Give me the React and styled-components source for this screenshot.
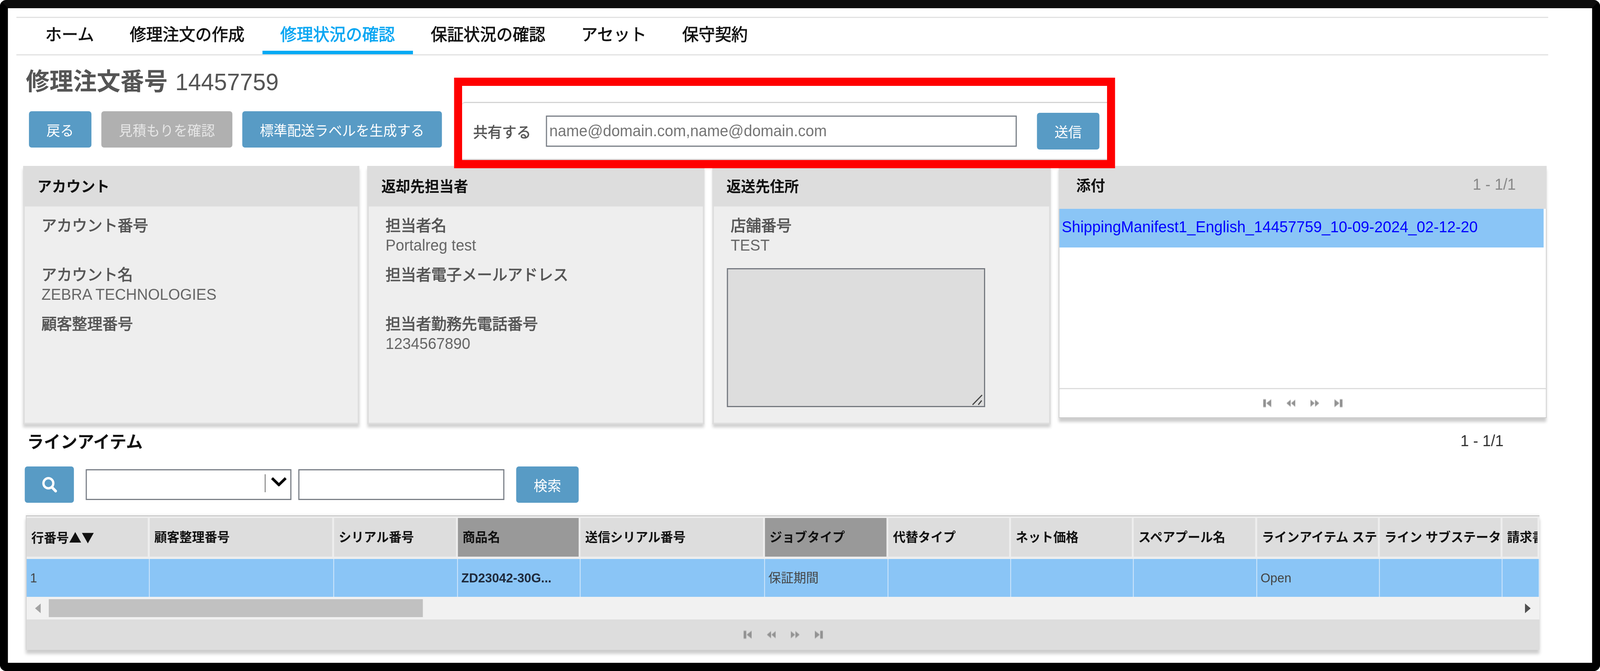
import React from 'react'
import styled, { createGlobalStyle } from 'styled-components'

const GlobalStyle = createGlobalStyle`
  html, body { margin: 0; padding: 0; background: #fff; overflow: hidden; }
  * { box-sizing: border-box; }
  body { font-family: "Liberation Sans", "Noto Sans CJK JP", sans-serif; }
`

const Frame = styled.div`
  width: 4200px;
  height: 1719px;
  transform: scaleX(0.97524);
  transform-origin: 0 0;
  border: 21px solid #000;
  border-top-color: #0c0c0c;
  border-radius: 16px;
  background: #fff;
  padding: 22px 0 0 22px;
  overflow: hidden;
`

const NavBar = styled.nav`
  width: 4021px;
  height: 99px;
  display: flex;
  padding-left: 29px;
  border-top: 3px solid #e2e2e2;
  border-bottom: 3px solid #e2e2e2;
`

const NavItem = styled.a`
  height: 93px;
  padding: 0 47px;
  line-height: 87px;
  font-size: 43px;
  -webkit-text-stroke: 1px currentColor;
  white-space: nowrap;
  color: ${p => (p.$active ? '#0aa6f2' : '#111')};
  border-bottom: 9px solid ${p => (p.$active ? '#03a9f4' : 'transparent')};
`

const TopRow = styled.div`
  height: 283px;
  display: flex;
  align-items: flex-start;
`

const TitleCol = styled.div`
  width: 1149px;
  padding-top: 33px;
`

const Title = styled.h1`
  margin: 0 0 40px 25px;
  height: 70px;
  line-height: 70px;
  font-size: 62px;
  font-weight: 700;
  color: #555;
  span {
    margin-left: 20px;
    font-size: 61px;
    font-weight: 400;
  }
`

const ButtonRow = styled.div`
  margin-left: 33px;
  display: flex;
  gap: 26px;
`

const Button = styled.button`
  height: ${p => p.$height || 93}px;
  padding: 0 46px;
  flex: none;
  font-family: inherit;
  font-size: 36px;
  color: ${p => (p.$muted ? '#e6e6e6' : '#fff')};
  background: ${p => (p.$muted ? '#b0b0b0' : '#589bc5')};
  border: 0;
  border-radius: 7px;
`

const ShareBox = styled.div`
  position: relative;
  z-index: 2;
  margin-top: 57px;
  width: 1735px;
  height: 232px;
  flex: none;
  border: 21px solid #f00;
  background: #fff;
  padding-top: 41px;
`

const SharePanel = styled.div`
  height: 149px;
  display: flex;
  align-items: center;
  padding-left: 29px;
  border-top: 3px solid #d4d4d4;
  border-bottom: 3px solid #d8d8d8;
  border-top-left-radius: 8px;
`

const ShareLabel = styled.label`
  width: 191px;
  flex: none;
  font-size: 38px;
  -webkit-text-stroke: 0.8px currentColor;
  color: #555;
`

const TextInput = styled.input`
  width: ${p => p.$width}px;
  height: ${p => p.$height}px;
  flex: none;
  padding: 0 6px;
  font-family: inherit;
  font-size: 40px;
  color: #555;
  background: #fff;
  border: 3px solid #7a7f87;
  border-radius: 0;
  outline: 0;
  &::placeholder { color: #757575; opacity: 1; }
`

const ShareButton = styled(Button)`
  margin-left: 53px;
`

const CardGrid = styled.div`
  margin-left: 18px;
  display: grid;
  grid-template-columns: 882px 885px 888px 1281px;
  column-gap: 21px;
  align-items: start;
`

const Card = styled.section`
  height: 662px;
  background: #eee;
  border: solid #ddd;
  border-width: 0 4px 4px;
  box-shadow: 0 8px 7px rgba(0, 0, 0, 0.18);
`

const CardHead = styled.h2`
  margin: 0 -4px;
  height: 104px;
  padding: 0 0 6px 37px;
  display: flex;
  align-items: center;
  font-size: 38px;
  font-weight: 700;
  color: #111;
  background: #ddd;
`

const CardBody = styled.div`
  padding: 24px 0 0 44px;
`

const Field = styled.div`
  height: 126px;
`

const FieldLabel = styled.div`
  height: 50px;
  line-height: 50px;
  font-size: 40px;
  -webkit-text-stroke: 1.1px currentColor;
  color: #555;
  white-space: nowrap;
`

const FieldValue = styled.div`
  height: 50px;
  line-height: 50px;
  font-size: 40px;
  color: #666;
  white-space: nowrap;
`

const NotesWrap = styled.div`
  position: relative;
  margin: 8px 0 0 -10px;
  width: 678px;
  height: 356px;
`

const Notes = styled.textarea`
  display: block;
  width: 100%;
  height: 100%;
  resize: none;
  background: #ddd;
  border: 3px solid #74787f;
  border-radius: 0;
  outline: 0;
`

const Grip = styled.svg`
  position: absolute;
  right: 7px;
  bottom: 5px;
  width: 28px;
  height: 27px;
`

const AttachCard = styled.section`
  height: 646px;
  display: flex;
  flex-direction: column;
  background: #fff;
  border-bottom: 2px solid #ccc;
  box-shadow: 0 10px 7px rgba(0, 0, 0, 0.2);
`

const AttachHead = styled.div`
  height: 110px;
  flex: none;
  padding: 0 81px 16px 46px;
  display: flex;
  align-items: center;
  justify-content: space-between;
  background: #ddd;
`

const AttachTitle = styled.h2`
  margin: 0;
  font-size: 38px;
  font-weight: 700;
  color: #111;
`

const Count = styled.span`
  font-size: 40px;
  color: ${p => p.$color};
`

const AttachList = styled.div`
  flex: 1;
  padding-right: 6px;
  border: solid #ccc;
  border-width: 0 2px;
`

const AttachRow = styled.div`
  height: 99px;
  padding: 0 0 6px 6px;
  display: flex;
  align-items: center;
  background: #8ac5f6;
`

const AttachLink = styled.a`
  font-size: 40px;
  color: #00f;
  white-space: nowrap;
`

const Pager = styled.div`
  height: ${p => p.$height}px;
  flex: none;
  display: flex;
  align-items: center;
  justify-content: center;
  gap: 38px;
  background: ${p => p.$bg};
  ${p => p.$bordered && `
    border: solid #ccc;
    border-width: 0 2px;
    border-top: 3px solid #ddd;
  `}
`

const PagerIcon = styled.svg`
  width: 24px;
  height: 22px;
  fill: #939393;
  filter: blur(0.8px);
`

const LineHead = styled.div`
  margin-left: 28px;
  width: 3876px;
  height: 84px;
  display: flex;
  align-items: center;
  justify-content: space-between;
`

const LineTitle = styled.h2`
  margin: 0;
  font-size: 44px;
  font-weight: 700;
  color: #111;
`

const SearchRow = styled.div`
  margin: 24px 0 0 22px;
  display: flex;
  align-items: center;
`

const IconButton = styled(Button)`
  width: 129px;
  padding: 0;
  display: flex;
  align-items: center;
  justify-content: center;
  margin-right: 31px;
`

const SelectBox = styled.div`
  width: 540px;
  height: 79px;
  flex: none;
  display: flex;
  align-items: center;
  justify-content: flex-end;
  gap: 14px;
  padding-right: 9px;
  margin-right: 18px;
  border: 3px solid #7a7f87;
  background: #fff;
`

const SelectDivider = styled.span`
  width: 2px;
  height: 46px;
  margin-top: -8px;
  background: #666;
`

const SelectArrow = styled.svg`
  width: 42px;
  height: 24px;
  margin-top: -16px;
`

const SearchButton = styled(Button)`
  margin-left: 31px;
`

const columns = '323px 484px 325px 322px 484px 324px 322px 322px 324px 322px 322px 97px'

const Table = styled.div`
  margin: 32px 0 0 25px;
  width: 3973px;
  border: solid #ccc;
  border-width: 3px 0 0 2px;
  box-shadow: 0 10px 8px rgba(0, 0, 0, 0.2), 0 -3px 6px rgba(0, 0, 0, 0.04);
`

const HeadRow = styled.div`
  display: grid;
  grid-template-columns: ${columns};
  padding: 4px 0 6px;
  background: #eee;
`

const HeadCell = styled.div`
  height: 99px;
  padding-left: 12px;
  line-height: 99px;
  overflow: hidden;
  white-space: nowrap;
  font-size: 33px;
  font-weight: 700;
  color: #111;
  background: ${p => (p.$sorted ? '#999' : '#ddd')};
  border-right: 5px solid #eee;
`

const SortMark = styled.span`
  font-family: "Noto Sans CJK JP", sans-serif;
`

const DataRow = styled.div`
  display: grid;
  grid-template-columns: ${columns};
  background: #8ac5f6;
`

const DataCell = styled.div`
  height: 97px;
  padding-left: 9px;
  line-height: 97px;
  overflow: hidden;
  white-space: nowrap;
  font-size: 33px;
  font-weight: ${p => (p.$strong ? 700 : 400)};
  color: ${p => (p.$strong ? '#1f2a3c' : '#444')};
  border-right: 2px solid #d6e9fb;
`

const ScrollBar = styled.div`
  height: 58px;
  display: flex;
  align-items: center;
  justify-content: space-between;
  padding: 0 23px 0 22px;
  background: #f1f1f1;
`

const ScrollLeft = styled.div`
  display: flex;
  align-items: center;
  gap: 21px;
`

const Thumb = styled.div`
  width: 982px;
  height: 46px;
  background: #c1c1c1;
`

const ScrollArrow = styled.svg`
  width: 15px;
  height: 25px;
  fill: ${p => p.$fill};
`

const GoFirst = () => (
  <PagerIcon viewBox="0 0 24 22"><path d="M1 1h7v20H1zM9 11 22 1v20z" /></PagerIcon>
)
const GoPrev = () => (
  <PagerIcon viewBox="0 0 24 22"><path d="M0 11 11 2v18zM12 11 23 2v18z" /></PagerIcon>
)
const GoNext = () => (
  <PagerIcon viewBox="0 0 24 22"><path d="M1 2l11 9-11 9zM13 2l11 9-11 9z" /></PagerIcon>
)
const GoLast = () => (
  <PagerIcon viewBox="0 0 24 22"><path d="M2 1l13 10L2 21zM16 1h7v20h-7z" /></PagerIcon>
)

const PagerIcons = () => (
  <>
    <GoFirst />
    <GoPrev />
    <GoNext />
    <GoLast />
  </>
)

const headers = [
  { label: '行番号', mark: '▲▼' },
  { label: '顧客整理番号' },
  { label: 'シリアル番号' },
  { label: '商品名', sorted: true },
  { label: '送信シリアル番号' },
  { label: 'ジョブタイプ', sorted: true },
  { label: '代替タイプ' },
  { label: 'ネット価格' },
  { label: 'スペアプール名' },
  { label: 'ラインアイテム ステータス' },
  { label: 'ライン サブステータス' },
  { label: '請求書' },
]

const row = ['1', '', '', 'ZD23042-30G...', '', '保証期間', '', '', '', 'Open', '', '']

export default function App() {
  return (
    <Frame>
      <GlobalStyle />
      <NavBar>
        <NavItem>ホーム</NavItem>
        <NavItem>修理注文の作成</NavItem>
        <NavItem $active>修理状況の確認</NavItem>
        <NavItem>保証状況の確認</NavItem>
        <NavItem>アセット</NavItem>
        <NavItem>保守契約</NavItem>
      </NavBar>

      <TopRow>
        <TitleCol>
          <Title>修理注文番号<span>14457759</span></Title>
          <ButtonRow>
            <Button>戻る</Button>
            <Button $muted>見積もりを確認</Button>
            <Button>標準配送ラベルを生成する</Button>
          </ButtonRow>
        </TitleCol>
        <ShareBox>
          <SharePanel>
            <ShareLabel>共有する</ShareLabel>
            <TextInput $width={1236} $height={80} placeholder="name@domain.com,name@domain.com" />
            <ShareButton $height={94}>送信</ShareButton>
          </SharePanel>
        </ShareBox>
      </TopRow>

      <CardGrid>
        <Card>
          <CardHead>アカウント</CardHead>
          <CardBody>
            <Field><FieldLabel>アカウント番号</FieldLabel></Field>
            <Field>
              <FieldLabel>アカウント名</FieldLabel>
              <FieldValue>ZEBRA TECHNOLOGIES</FieldValue>
            </Field>
            <Field><FieldLabel>顧客整理番号</FieldLabel></Field>
          </CardBody>
        </Card>
        <Card>
          <CardHead>返却先担当者</CardHead>
          <CardBody>
            <Field>
              <FieldLabel>担当者名</FieldLabel>
              <FieldValue>Portalreg test</FieldValue>
            </Field>
            <Field><FieldLabel>担当者電子メールアドレス</FieldLabel></Field>
            <Field>
              <FieldLabel>担当者勤務先電話番号</FieldLabel>
              <FieldValue>1234567890</FieldValue>
            </Field>
          </CardBody>
        </Card>
        <Card>
          <CardHead>返送先住所</CardHead>
          <CardBody>
            <Field>
              <FieldLabel>店舗番号</FieldLabel>
              <FieldValue>TEST</FieldValue>
            </Field>
            <NotesWrap>
              <Notes readOnly />
              <Grip viewBox="0 0 28 27" fill="none" stroke="#444" strokeWidth="3">
                <path d="M2 26 27 1M17 26l9-11" />
              </Grip>
            </NotesWrap>
          </CardBody>
        </Card>
        <AttachCard>
          <AttachHead>
            <AttachTitle>添付</AttachTitle>
            <Count $color="#888">1 - 1/1</Count>
          </AttachHead>
          <AttachList>
            <AttachRow>
              <AttachLink>ShippingManifest1_English_14457759_10-09-2024_02-12-20</AttachLink>
            </AttachRow>
          </AttachList>
          <Pager $height={75} $bg="#fff" $bordered>
            <PagerIcons />
          </Pager>
        </AttachCard>
      </CardGrid>

      <LineHead>
        <LineTitle>ラインアイテム</LineTitle>
        <Count $color="#333">1 - 1/1</Count>
      </LineHead>

      <SearchRow>
        <IconButton>
          <svg width="40" height="40" viewBox="0 0 40 40" fill="none" stroke="#fff">
            <circle cx="17" cy="16" r="13" strokeWidth="6" />
            <path d="M26 26 36 36" strokeWidth="7" strokeLinecap="round" />
          </svg>
        </IconButton>
        <SelectBox>
          <SelectDivider />
          <SelectArrow viewBox="0 0 42 24" fill="none" stroke="#000" strokeWidth="7">
            <path d="M3 3 21 20 39 3" />
          </SelectArrow>
        </SelectBox>
        <TextInput $width={541} $height={79} />
        <SearchButton>検索</SearchButton>
      </SearchRow>

      <Table>
        <HeadRow>
          {headers.map(h => (
            <HeadCell key={h.label} $sorted={h.sorted}>
              {h.label}
              {h.mark && <SortMark>{h.mark}</SortMark>}
            </HeadCell>
          ))}
        </HeadRow>
        <DataRow>
          {row.map((value, i) => (
            <DataCell key={i} $strong={i === 3}>{value}</DataCell>
          ))}
        </DataRow>
        <ScrollBar>
          <ScrollLeft>
            <ScrollArrow $fill="#a3a3a3" viewBox="0 0 15 25"><path d="M15 0v25L0 12.500z" /></ScrollArrow>
            <Thumb />
          </ScrollLeft>
          <ScrollArrow $fill="#505050" viewBox="0 0 15 25"><path d="M0 0v25l15-12.500z" /></ScrollArrow>
        </ScrollBar>
        <Pager $height={78} $bg="#ddd">
          <PagerIcons />
        </Pager>
      </Table>
    </Frame>
  )
}
